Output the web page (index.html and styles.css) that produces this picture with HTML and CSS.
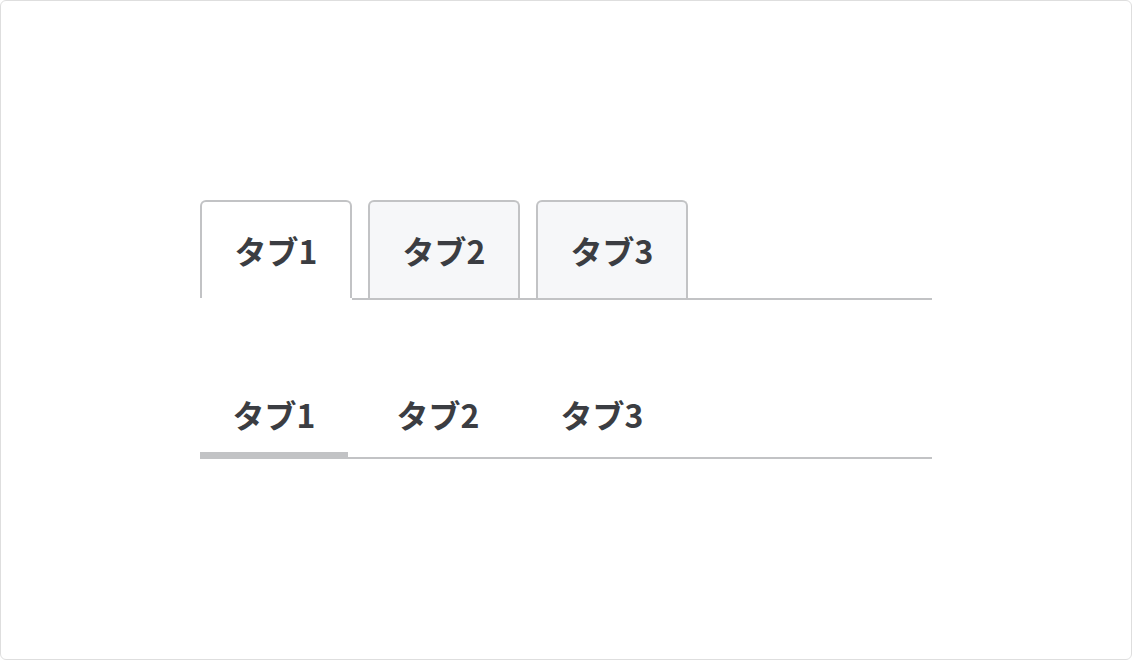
FILE: index.html
```html
<!DOCTYPE html>
<html lang="ja">
  <head>
    <meta charset="UTF-8" />
    <meta name="viewport" content="width=device-width, initial-scale=1.0" />
    <title>タブ</title>
    <link rel="stylesheet" href="styles.css">
  </head>
  <body>
    <div class="frame">
      <div class="box-tabs">
        <div class="box-tab active">タブ1</div>
        <div class="box-tab">タブ2</div>
        <div class="box-tab">タブ3</div>
      </div>

      <div class="line-tabs">
        <div class="line-tab active">タブ1</div>
        <div class="line-tab">タブ2</div>
        <div class="line-tab">タブ3</div>
      </div>
    </div>
  </body>
</html>
```

FILE: styles.css
```css
html,
body {
  margin: 0;
  padding: 0;
  height: 100%;
  background: #fff;
  font-family: "Noto Sans CJK JP", "Noto Sans", sans-serif;
  color: #3b3d42;
}
.frame {
  box-sizing: border-box;
  height: 660px;
  border: 1px solid #dedede;
  border-radius: 6px;
  padding: 199px 199px 0;
}
.box-tabs,
.line-tabs {
  display: flex;
  gap: 16px;
  width: 732px;
  border-bottom: 2px solid #c2c3c5;
}
.box-tab {
  position: relative;
  box-sizing: border-box;
  width: 152px;
  height: 98px;
  border: 2px solid #c2c3c5;
  border-bottom: 0;
  border-radius: 6px 6px 0 0;
  background: #f6f7f9;
  display: flex;
  align-items: center;
  justify-content: center;
  font-size: 32px;
  font-weight: 700;
  line-height: 1;
}
.box-tab.active {
  background: #fff;
}
.box-tab.active::after {
  content: "";
  position: absolute;
  left: -2px;
  right: -2px;
  bottom: -2px;
  height: 2px;
  background: #fff;
}
.line-tabs {
  margin-top: 74px;
}
.line-tab {
  position: relative;
  box-sizing: border-box;
  width: 148px;
  height: 83px;
  padding-bottom: 4px;
  display: flex;
  align-items: center;
  justify-content: center;
  font-size: 32px;
  font-weight: 700;
  line-height: 1;
}
.line-tab.active::after {
  content: "";
  position: absolute;
  left: 0;
  right: 0;
  bottom: -2px;
  height: 7px;
  background: #c2c3c5;
}
```
